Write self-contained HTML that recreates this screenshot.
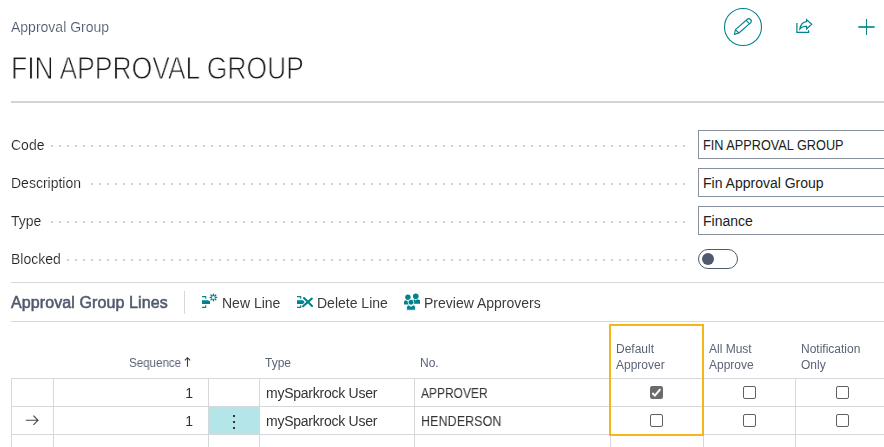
<!DOCTYPE html>
<html><head><meta charset="utf-8">
<style>
*{margin:0;padding:0;box-sizing:border-box}
html,body{width:884px;height:447px;overflow:hidden;background:#fff}
body{position:relative;font-family:"Liberation Sans",sans-serif;color:#212121}
.a{position:absolute;white-space:nowrap;will-change:transform}
.cap{left:11px;top:19px;font-size:14px;color:#4a566a;-webkit-text-stroke:0.15px #fff}
.title{left:11px;top:51px;font-size:30.5px;color:#1a1a1a;transform:scaleX(0.868);transform-origin:0 0;-webkit-text-stroke:0.9px #fff}
.sep{position:absolute;left:11px;width:873px;height:2px;background:#d0d3d9}
.lbl{font-size:14px;color:#222;left:11px;-webkit-text-stroke:0.15px #fff}
.dots{position:absolute;height:2px;background-image:linear-gradient(to right,#cfd2d8 2px,transparent 2px);background-size:8px 2px;background-repeat:repeat-x}
.fld{position:absolute;left:698px;width:200px;height:29px;border:1px solid #8a919e;font-size:14px;padding-left:4px;padding-top:1px;line-height:27px;color:#212121}
.tog{position:absolute;left:698px;top:249px;width:40px;height:20px;border:1px solid #505a6c;border-radius:10px}
.knob{position:absolute;left:3px;top:3px;width:12px;height:12px;border-radius:6px;background:#4f5a6e}
.hl{position:absolute;height:1px;background:#d6d8dc}
.vl{position:absolute;width:1px;background:#d6d8dc}
.gh{font-size:12px;color:#5a6477;line-height:16.3px}
.cell{font-size:14px;color:#333}
.cb{position:absolute;width:13px;height:13px;border:1px solid #606060;border-radius:2px;background:#fff}
.cb.on{background:#6b6b6b;border-color:#6b6b6b}
.act{font-size:14px;color:#3b3b3b}
</style></head><body>
<div class="a cap">Approval Group</div>
<div class="a title">FIN APPROVAL GROUP</div>

<!-- header icons -->
<svg class="a" style="left:0;top:0" width="884" height="60">
  <circle cx="743" cy="27" r="18.5" fill="none" stroke="#00838c" stroke-width="1.1"/>
  <g fill="none" stroke="#00838c" stroke-width="1.1" stroke-linejoin="round">
    <path d="M734.4 34.4 L735.4 29.6 L747.1 19.5 A2.4 2.4 0 0 1 750.5 22.9 L738.9 33 Z"/>
    <path d="M735.4 29.6 L738.9 33 M746.2 20.4 L749.6 23.8"/>
  </g>
  <g fill="none" stroke="#00838c" stroke-width="1.2" stroke-linejoin="miter">
    <path d="M796.9 23 V32.3 H808.6 V30.2"/>
    <path d="M806.6 19.6 L811.7 24.2 L806.6 28.9 V26.4 C803.6 25.9 801.6 26.8 799.9 28.9 C800.5 24.9 803.1 21.9 806.6 21.6 Z"/>
  </g>
  <path d="M858.3 27 H874.6" stroke="#17908f" stroke-width="1.8" fill="none"/>
  <path d="M866.5 19 V35" stroke="#0b878c" stroke-width="1.1" fill="none"/>
</svg>

<div class="sep" style="top:101px"></div>

<div class="a lbl" style="top:137px">Code</div>
<div class="dots" style="left:51px;top:145px;width:636px"></div>
<div class="a lbl" style="top:175px">Description</div>
<div class="dots" style="left:91px;top:183px;width:596px"></div>
<div class="a lbl" style="top:213px">Type</div>
<div class="dots" style="left:51px;top:221px;width:636px"></div>
<div class="a lbl" style="top:251px">Blocked</div>
<div class="dots" style="left:67px;top:259px;width:620px"></div>

<div class="fld" style="top:130px"><span style="display:inline-block;transform:scaleX(0.908);transform-origin:0 0">FIN APPROVAL GROUP</span></div>
<div class="fld" style="top:168px">Fin Approval Group</div>
<div class="fld" style="top:206px">Finance</div>
<div class="tog"><div class="knob"></div></div>

<div class="hl" style="left:11px;top:282px;width:873px"></div>
<div class="a" style="left:11px;top:294px;font-size:16px;color:#505a6c;-webkit-text-stroke:0.55px #505a6c;letter-spacing:0.1px">Approval Group Lines</div>
<div class="vl" style="left:184px;top:291px;height:23px"></div>

<svg class="a" style="left:0;top:280px" width="884" height="40" viewBox="0 280 884 40">
  <g fill="none" stroke="#00838c" stroke-width="1.1">
    <path d="M202 296.6 H205.7 V298.8 M202 307.4 H205.7 V305.2"/>
    <path d="M297 296.6 H300.7 V298.8 M297 307.4 H300.7 V305.2"/>
  </g>
  <g fill="#00838c">
    <path d="M202 300.2 H208.6 V301 H210 V304 H202 Z"/>
    <path d="M297 300.2 H303 L304.6 302.1 L303 304 H297 Z"/>
  </g>
  <g stroke="#00838c" stroke-width="1.4" stroke-linecap="round">
    <path d="M213.4 294.1 V300.7 M210.1 297.4 H216.7 M211 295 L215.8 299.8 M215.8 295 L211 299.8"/>
  </g>
  <circle cx="213.4" cy="297.4" r="1.5" fill="#fff"/>
  <g stroke="#00838c" stroke-width="2.1" stroke-linecap="round">
    <path d="M304 298 L312 306 M311.8 298.6 L303 306.2"/>
  </g>
  <g fill="#00838c">
    <circle cx="415.8" cy="296.2" r="2.8"/>
    <path d="M413 303.8 V301 Q413 299.2 414.6 299.2 L415.8 300.6 L417 299.2 Q420 299.2 420 301 V303.8 Z"/>
    <circle cx="407.9" cy="297.3" r="2.7"/>
    <path d="M404 304.6 V302 Q404 300.2 405.8 300.2 L407.9 301.6 L410 300.2 Q411.5 300.2 411.5 302 V304.6 Z"/>
  </g>
  <g fill="#00838c" stroke="#fff" stroke-width="0.8">
    <circle cx="411" cy="302.2" r="2.9"/>
    <path d="M406.6 310.2 V307.2 Q406.6 305 408.8 305 L411 306.6 L413.2 305 Q415.4 305 415.4 307.2 V310.2 Z"/>
  </g>
</svg>
<div class="a act" style="left:222px;top:295px">New Line</div>
<div class="a act" style="left:317px;top:295px">Delete Line</div>
<div class="a act" style="left:424px;top:295px">Preview Approvers</div>

<div class="hl" style="left:11px;top:321px;width:873px"></div>

<!-- grid header -->
<div class="a gh" style="left:129px;top:355px;transform:scaleX(0.965);transform-origin:0 0">Sequence</div>
<svg class="a" style="left:180px;top:354px" width="16" height="16"><path d="M7.5 3.7 V12.7 M4.8 6.4 L7.5 3.7 L10.2 6.4" fill="none" stroke="#3a3a3a" stroke-width="1.1"/></svg>
<div class="a gh" style="left:265px;top:355px">Type</div>
<div class="a gh" style="left:420px;top:355px">No.</div>
<div class="a gh" style="left:616px;top:341px">Default<br>Approver</div>
<div class="a gh" style="left:709px;top:341px">All Must<br>Approve</div>
<div class="a gh" style="left:801px;top:341px">Notification<br>Only</div>

<!-- grid lines -->
<div class="hl" style="left:11px;top:378px;width:873px"></div>
<div class="hl" style="left:11px;top:406px;width:873px"></div>
<div class="hl" style="left:11px;top:434px;width:873px"></div>
<div class="vl" style="left:11px;top:378px;height:69px"></div>
<div class="vl" style="left:53px;top:378px;height:69px"></div>
<div class="vl" style="left:208px;top:378px;height:69px"></div>
<div class="vl" style="left:259px;top:378px;height:69px"></div>
<div class="vl" style="left:414px;top:378px;height:69px"></div>
<div class="vl" style="left:610px;top:378px;height:69px"></div>
<div class="vl" style="left:703px;top:378px;height:69px"></div>
<div class="vl" style="left:795px;top:378px;height:69px"></div>

<div style="position:absolute;left:209px;top:407px;width:50px;height:27px;background:#b3e5e9"></div>
<div style="position:absolute;left:233px;top:414.5px;width:2px;height:2px;background:#333"></div><div style="position:absolute;left:233px;top:420.5px;width:2px;height:2px;background:#333"></div><div style="position:absolute;left:233px;top:426.5px;width:2px;height:2px;background:#333"></div>
<svg class="a" style="left:20px;top:410px" width="24" height="20"><path d="M5.8 10.3 H18 M13.4 5.7 L18 10.3 L13.4 14.9" fill="none" stroke="#444" stroke-width="1.1"/></svg>

<div class="a cell" style="left:100px;top:385px;width:93px;text-align:right">1</div>
<div class="a cell" style="left:100px;top:413px;width:93px;text-align:right">1</div>
<div class="a cell" style="left:266px;top:385px;letter-spacing:-0.25px">mySparkrock User</div>
<div class="a cell" style="left:266px;top:413px;letter-spacing:-0.25px">mySparkrock User</div>
<div class="a cell" style="left:421px;top:385px;transform:scaleX(0.857);transform-origin:0 0">APPROVER</div>
<div class="a cell" style="left:421px;top:413px;transform:scaleX(0.90);transform-origin:0 0">HENDERSON</div>

<svg class="a" style="left:650px;top:386px" width="13" height="13"><rect x="0" y="0" width="13" height="13" rx="2.2" fill="#6b6b6b"/><path d="M2.3 7 L4.9 9.6 L10.3 3.2" fill="none" stroke="#fff" stroke-width="2"/></svg>
<div class="cb" style="left:650px;top:414px"></div>
<div class="cb" style="left:743px;top:386px"></div>
<div class="cb" style="left:743px;top:414px"></div>
<div class="cb" style="left:836px;top:386px"></div>
<div class="cb" style="left:836px;top:414px"></div>

<div style="position:absolute;left:609px;top:324px;width:95px;height:112px;border:2px solid #f5b619"></div>
</body></html>
